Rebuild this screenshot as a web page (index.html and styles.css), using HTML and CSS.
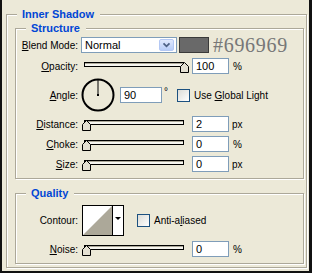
FILE: index.html
```html
<!DOCTYPE html>
<html lang="en">
<head>
  <meta charset="UTF-8" />
  <title>Inner Shadow</title>
  <link rel="stylesheet" href="styles.css">
</head>
<body>
  <div class="window">
    <fieldset class="group outer">
      <legend>Inner Shadow</legend>

      <fieldset class="group structure">
        <legend>Structure</legend>

        <div class="row blend-row">
          <label class="lbl"><u>B</u>lend Mode:</label>
          <div class="select">
            <span class="select-text">Normal</span>
            <span class="drop">
              <svg width="15" height="14" viewBox="0 0 15 14"><path d="M4 5 L7.5 8.5 L11 5" fill="none" stroke="#4d6185" stroke-width="2"/></svg>
            </span>
          </div>
          <span class="swatch"></span>
          <span class="hex">#696969</span>
        </div>

        <div class="row opacity-row">
          <label class="lbl"><u>O</u>pacity:</label>
          <div class="slider">
            <div class="track"></div>
            <svg class="thumb at-max" width="9" height="11" viewBox="0 0 9 11"><polygon points="0.5,4.5 4.5,0.5 8.5,4.5 8.5,10.5 0.5,10.5" fill="#e4e0d2" stroke="#000"/></svg>
          </div>
          <span class="field">100</span>
          <span class="unit">%</span>
        </div>

        <div class="row angle-row">
          <label class="lbl"><u>A</u>ngle:</label>
          <svg class="dial" width="34" height="34" viewBox="0 0 34 34">
            <circle cx="17" cy="17" r="15.5" fill="none" stroke="#000" stroke-width="2"/>
            <line x1="17" y1="17" x2="17" y2="2" stroke="#000" stroke-width="1"/>
            <rect x="16" y="16" width="2" height="2" fill="#000"/>
          </svg>
          <span class="field wide">90</span>
          <span class="deg">°</span>
          <span class="check"></span>
          <span class="check-text">Use <u>G</u>lobal Light</span>
        </div>

        <div class="row">
          <label class="lbl"><u>D</u>istance:</label>
          <div class="slider">
            <div class="track"></div>
            <svg class="thumb" width="9" height="11" viewBox="0 0 9 11"><polygon points="0.5,4.5 4.5,0.5 8.5,4.5 8.5,10.5 0.5,10.5" fill="#e4e0d2" stroke="#000"/></svg>
          </div>
          <span class="field">2</span>
          <span class="unit px">px</span>
        </div>

        <div class="row">
          <label class="lbl"><u>C</u>hoke:</label>
          <div class="slider">
            <div class="track"></div>
            <svg class="thumb" width="9" height="11" viewBox="0 0 9 11"><polygon points="0.5,4.5 4.5,0.5 8.5,4.5 8.5,10.5 0.5,10.5" fill="#e4e0d2" stroke="#000"/></svg>
          </div>
          <span class="field">0</span>
          <span class="unit">%</span>
        </div>

        <div class="row">
          <label class="lbl"><u>S</u>ize:</label>
          <div class="slider">
            <div class="track"></div>
            <svg class="thumb" width="9" height="11" viewBox="0 0 9 11"><polygon points="0.5,4.5 4.5,0.5 8.5,4.5 8.5,10.5 0.5,10.5" fill="#e4e0d2" stroke="#000"/></svg>
          </div>
          <span class="field">0</span>
          <span class="unit px">px</span>
        </div>
      </fieldset>

      <fieldset class="group quality">
        <legend>Quality</legend>

        <div class="row contour-row">
          <label class="lbl">Contour:</label>
          <div class="contour">
            <svg class="curve" width="29" height="29" viewBox="0 0 29 29">
              <rect width="29" height="29" fill="#fff"/>
              <polygon points="0,29 29,0 29,29" fill="#aca899"/>
            </svg>
            <span class="contour-drop"><span class="arrow"></span></span>
          </div>
          <span class="check aa"></span>
          <span class="check-text">Anti-a<u>l</u>iased</span>
        </div>

        <div class="row noise-row">
          <label class="lbl"><u>N</u>oise:</label>
          <div class="slider">
            <div class="track"></div>
            <svg class="thumb" width="9" height="11" viewBox="0 0 9 11"><polygon points="0.5,4.5 4.5,0.5 8.5,4.5 8.5,10.5 0.5,10.5" fill="#e4e0d2" stroke="#000"/></svg>
          </div>
          <span class="field">0</span>
          <span class="unit">%</span>
        </div>
      </fieldset>
    </fieldset>
  </div>
</body>
</html>
```

FILE: styles.css
```css
body {
  margin: 0;
  background: #ece9d8;
  font-family: "Liberation Sans", Arial, sans-serif;
  font-size: 10px;
  color: #000;
}
.window {
  width: 312px;
  height: 273px;
  box-sizing: border-box;
  border-left: 2px solid #111;
  border-right: 3px solid #111;
  border-bottom: 2px solid #111;
  padding-top: 8px;
}

/* group boxes */
.group {
  margin: 0;
  padding: 0;
  min-width: 0;
  border: 1px solid #aca899;
  box-shadow: inset 1px 1px 0 #fff, 1px 1px 0 #fff;
}
.group legend {
  padding: 0 6px 0 5px;
  margin-left: 10px;
  font-size: 11px;
  line-height: 13px;
  font-weight: bold;
  color: #0046d5;
  background: #ece9d8;
}
.outer {
  margin: 0 2px 0 4px;
  padding-bottom: 3px;
}
.structure {
  margin: 1px 2px 0 8px;
  padding: 2px 0 6px 0;
}
.quality {
  margin: 8px 2px 0 8px;
  padding: 5px 0 6px 0;
}

/* rows */
.row {
  display: flex;
  align-items: center;
  height: 16px;
  margin-top: 4px;
}
.row:first-of-type {
  margin-top: 0;
}
.opacity-row {
  margin-top: 5px;
}
.angle-row {
  height: 34px;
}
.contour-row {
  height: 31px;
  margin-top: 0;
}
.noise-row {
  margin-top: 5px;
}
.lbl {
  width: 62px;
  flex: none;
  text-align: right;
  white-space: nowrap;
}

/* blend select */
.select {
  display: flex;
  align-items: center;
  justify-content: space-between;
  width: 96px;
  height: 16px;
  box-sizing: border-box;
  margin-left: 3px;
  border: 1px solid #7f9db9;
  background: #fff;
  padding: 0 2px 0 3px;
  font-size: 11px;
}
.drop {
  display: flex;
  width: 15px;
  height: 12px;
  border-radius: 2px;
  background: linear-gradient(#e0e9fd, #b8cdf8);
  border: 1px solid #b4c8f4;
  box-sizing: border-box;
  overflow: hidden;
  justify-content: center;
  align-items: center;
}
.drop svg {
  width: 13px;
  height: 12px;
}
.swatch {
  width: 30px;
  height: 16px;
  box-sizing: border-box;
  margin-left: 2px;
  border: 1px solid #3a3a3a;
  background: #696969;
}
.hex {
  margin-left: 4px;
  font-family: "Liberation Serif", "Times New Roman", serif;
  font-size: 20px;
  letter-spacing: 0.7px;
  color: #777;
  line-height: 16px;
}

/* sliders */
.slider {
  position: relative;
  width: 102px;
  height: 16px;
  margin: 0 7px 0 5px;
  flex: none;
}
.track {
  margin: 4px 0 0 1px;
  width: 100px;
  height: 5px;
  box-sizing: border-box;
  border: 1px solid #000;
  background: #f6f5ef;
  box-shadow: inset 0 1px 0 #aca899;
}
.thumb {
  position: absolute;
  top: 4px;
  left: -1px;
}
.thumb.at-max {
  left: 97px;
}

/* number fields */
.field {
  width: 37px;
  height: 16px;
  box-sizing: border-box;
  border: 1px solid #7f9db9;
  background: #fff;
  padding-left: 3px;
  font-size: 11px;
  line-height: 14px;
  flex: none;
}
.field.wide {
  width: 42px;
  margin-left: 5px;
}
.unit {
  margin-left: 4px;
}
.unit.px {
  margin-left: 3px;
}

/* angle */
.dial {
  margin-left: 3px;
  flex: none;
}
.deg {
  margin-left: 2px;
  align-self: flex-start;
  margin-top: 8px;
}
.check {
  width: 13px;
  height: 13px;
  box-sizing: border-box;
  border: 1px solid #1c5180;
  background: linear-gradient(135deg, #dcdcd7, #fff);
  margin-left: 9px;
  flex: none;
}
.check-text {
  margin-left: 4px;
  white-space: nowrap;
}

/* contour */
.contour {
  display: flex;
  width: 42px;
  height: 31px;
  box-sizing: border-box;
  margin-left: 4px;
  border: 1px solid #000;
  background: #fff;
}
.curve {
  display: block;
  border-right: 1px solid #000;
}
.contour-drop {
  flex: 1;
  display: flex;
  justify-content: center;
  padding-top: 11px;
  background: #fff;
}
.arrow {
  width: 0;
  height: 0;
  border-left: 3px solid transparent;
  border-right: 3px solid transparent;
  border-top: 3px solid #000;
}
.check.aa {
  margin-left: 13px;
}
```
